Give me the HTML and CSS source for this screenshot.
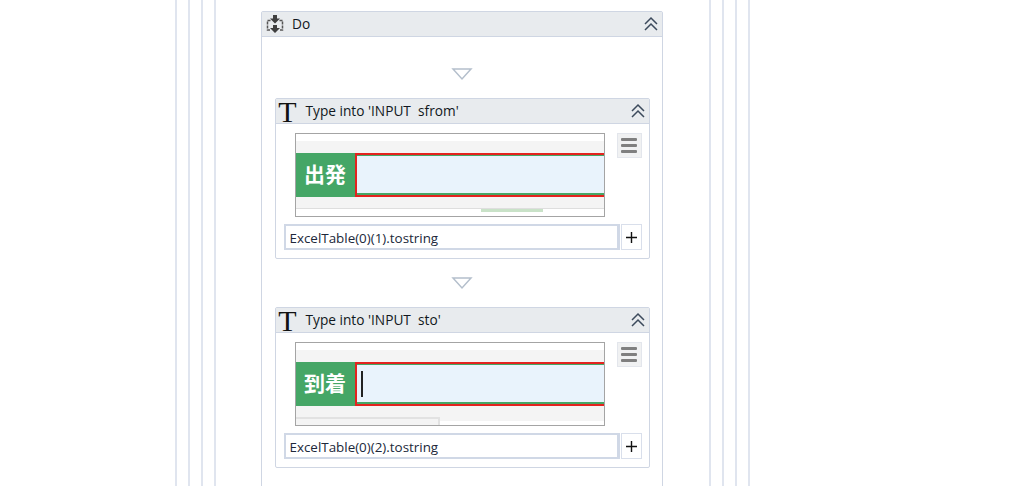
FILE: index.html
```html
<!DOCTYPE html>
<html lang="en">
<head>
<meta charset="utf-8">
<title>Do sequence</title>
<link rel="stylesheet" href="styles.css">
</head>
<body>
<div class="frame outer"><div class="frame"><div class="frame"><div class="frame inner">
  <section class="card do">
    <header class="head">
      <svg class="do-icon" width="18" height="20" viewBox="0 0 18 20"><path d="M4.500 6.500H1.500V16H4.500M13.500 6.500h3V16h-3" fill="none" stroke="#555" stroke-width="1.500" stroke-dasharray="3 1"/><path d="M7 1h4v3.500h3L9 9.500 4 4.500h3zM7 11h4v3h3l-5 5-5-5h3z" fill="#3f3f3f"/></svg>
      <span class="title">Do</span>
      <svg class="chev" width="16" height="16" viewBox="0 0 16 16"><path d="M2 8l6-6 6 6M2 14l6-6 6 6" fill="none" stroke="#3c4a5c" stroke-width="1.500"/></svg>
    </header>
    <div class="do-body">
      <svg class="arrow" width="22" height="14" viewBox="0 0 22 14"><path d="M2 2h18l-9 10z" fill="#fff" stroke="#b4bfcc" stroke-width="1.500"/></svg>
      <section class="card activity">
        <header class="head">
          <span class="t-icon">T</span>
          <span class="title">Type into 'INPUT  sfrom'</span>
          <svg class="chev" width="16" height="16" viewBox="0 0 16 16"><path d="M2 8l6-6 6 6M2 14l6-6 6 6" fill="none" stroke="#3c4a5c" stroke-width="1.500"/></svg>
        </header>
        <div class="activity-body">
          <div class="shot-row">
            <div class="shot">
              <div class="gap-white"></div>
              <div class="band"></div>
              <div class="field">
                <span class="label">出発</span>
                <span class="box"><span class="box-in"></span></span>
              </div>
              <div class="band-low"></div>
              <div class="strip"><span class="strip-bar"></span></div>
            </div>
            <button class="menu"><i></i><i></i><i></i></button>
          </div>
          <div class="input-row">
            <div class="input">ExcelTable(0)(1).tostring</div>
            <div class="plus"><svg width="13" height="13" viewBox="0 0 13 13"><path d="M6.500 1v11M1 6.500h11" stroke="#111" stroke-width="1.400"/></svg></div>
          </div>
        </div>
      </section>
      <svg class="arrow" width="22" height="14" viewBox="0 0 22 14"><path d="M2 2h18l-9 10z" fill="#fff" stroke="#b4bfcc" stroke-width="1.500"/></svg>
      <section class="card activity">
        <header class="head">
          <span class="t-icon">T</span>
          <span class="title">Type into 'INPUT  sto'</span>
          <svg class="chev" width="16" height="16" viewBox="0 0 16 16"><path d="M2 8l6-6 6 6M2 14l6-6 6 6" fill="none" stroke="#3c4a5c" stroke-width="1.500"/></svg>
        </header>
        <div class="activity-body">
          <div class="shot-row">
            <div class="shot">
              <div class="gap-white"></div>
              <div class="band"></div>
              <div class="field">
                <span class="label">到着</span>
                <span class="box"><span class="box-in"><i class="caret"></i></span></span>
              </div>
              <div class="band-low"></div>
              <div class="strip-two"><span class="tab"></span><span class="tab-rest"></span></div>
            </div>
            <button class="menu"><i></i><i></i><i></i></button>
          </div>
          <div class="input-row">
            <div class="input">ExcelTable(0)(2).tostring</div>
            <div class="plus"><svg width="13" height="13" viewBox="0 0 13 13"><path d="M6.500 1v11M1 6.500h11" stroke="#111" stroke-width="1.400"/></svg></div>
          </div>
        </div>
      </section>
      <svg class="arrow" width="22" height="14" viewBox="0 0 22 14"><path d="M2 2h18l-9 10z" fill="#fff" stroke="#b4bfcc" stroke-width="1.500"/></svg>
    </div>
  </section>
</div></div></div></div>
</body>
</html>
```
FILE: styles.css
```css
* { box-sizing: border-box; }
html, body { margin: 0; height: 486px; overflow: hidden; background: #fff; }
body { font-family: "Open Sans", "Noto Sans", sans-serif; color: #1c2430; }

.frame {
  height: 100%;
  padding: 0 11px;
  border-left: 2px solid #e0e5ef;
  border-right: 2px solid #e0e5ef;
}
.outer { width: 575px; margin-left: 175px; }
.inner { padding: 11px 0 0 45px; overflow: hidden; }

.card {
  border: 1px solid #cfd6e3;
  border-radius: 2px;
  background: #fff;
}
.do { width: 402px; height: 600px; }
.head {
  display: flex;
  align-items: center;
  height: 25px;
  background: #e8ebee;
  border-bottom: 1px solid #cfd6e3;
}
.do > .head { padding: 0 3px 0 4px; }
.do-icon { flex: none; }
.do > .head .title { margin-left: 8px; }
.title { flex: 1; font-size: 13.700px; white-space: pre; line-height: 20px; color: #111821; }
.chev { flex: none; }
.do-body { display: flex; flex-direction: column; align-items: center; padding: 30px 13px 0; }
.arrow { display: block; flex: none; }
.activity { width: 375px; height: 161px; margin: 17px 0; }
.activity .head { padding: 0 3px 0 1px; }
.t-icon {
  flex: none;
  width: 22px;
  margin-right: 7px;
  font: 30px/25px "Liberation Serif", serif;
  color: #111;
  text-align: center;
}
.activity-body { padding: 9px 7px 0 8px; }
.shot-row { display: flex; align-items: flex-start; padding-left: 11px; }
.shot {
  width: 310px;
  height: 84px;
  border: 1px solid #a4a4a4;
  background: #fff;
  display: flex;
  flex-direction: column;
}
.gap-white { height: 7px; }
.band { height: 12px; background: #f4f4f4; }
.field { display: flex; height: 44px; }
.label {
  flex: none;
  width: 59px;
  background: #45a666;
  color: #fff;
  font: 700 21px/40px "Noto Sans CJK JP", sans-serif;
  text-align: center;
}
.box {
  flex: 1;
  border: 2px solid #e3231f;
  border-right: 0;
}
.box-in {
  display: flex;
  align-items: center;
  height: 100%;
  background: #e9f3fc;
  border-top: 1px solid #45a666;
  border-bottom: 2px solid #45a666;
  padding-left: 4px;
}
.caret { display: block; width: 2px; height: 26px; background: #222; }
.band-low { height: 11px; background: #f4f4f4; }
.strip { flex: 1; padding-left: 185px; border-top: 1px solid #dedede; }
.strip-bar { display: block; width: 62px; height: 3px; background: #c9e2c8; }
.strip-two { flex: 1; display: flex; align-items: flex-start; }
.tab { width: 144px; height: 100%; background: #f4f4f4; border-top: 2px solid #e2e2e2; border-right: 2px solid #e2e2e2; }
.tab-rest { flex: 1; height: 4px; background: #f4f4f4; }
.menu {
  margin-left: 12px;
  width: 25px;
  height: 25px;
  padding: 0;
  border: 1px solid #e3e6ec;
  background: #f0f1f2;
  display: flex;
  flex-direction: column;
  align-items: center;
  justify-content: center;
  gap: 3px;
}
.menu i { display: block; width: 16px; height: 3px; background: #7f7f7f; border-radius: 1px; }
.input-row { display: flex; margin-top: 7px; }
.input {
  width: 336px;
  height: 26px;
  border: 2px solid #d0d8e6;
  border-right-width: 3px;
  font-size: 13.400px;
  line-height: 25px;
  padding-left: 4px;
  color: #20283a;
  white-space: pre;
}
.plus {
  width: 21px;
  height: 26px;
  margin-left: 1px;
  border: 1px solid #d9dfeb;
  display: flex;
  align-items: center;
  justify-content: center;
}
```
